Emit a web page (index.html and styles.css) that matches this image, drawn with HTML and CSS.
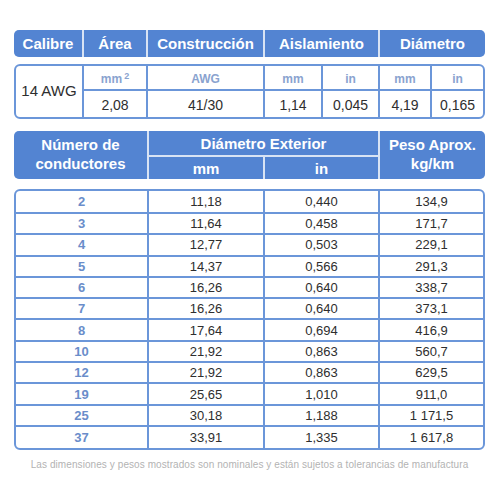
FILE: index.html
```html
<!DOCTYPE html>
<html lang="es">
<head>
<meta charset="UTF-8" />
<meta name="viewport" content="width=device-width, initial-scale=1" />
<title>Cable 14 AWG</title>
<link rel="stylesheet" href="styles.css">
</head>
<body>

<div class="sheet">

  <div class="headBar specHead">
    <div class="hcell">Calibre</div>
    <div class="hcell">Área</div>
    <div class="hcell">Construcción</div>
    <div class="hcell">Aislamiento</div>
    <div class="hcell">Diámetro</div>
  </div>

  <div class="box specBox">
    <div class="cell gauge">14 AWG</div>
    <div class="cell unit">mm<span class="sup">2</span></div>
    <div class="cell unit">AWG</div>
    <div class="cell unit">mm</div>
    <div class="cell unit">in</div>
    <div class="cell unit">mm</div>
    <div class="cell unit">in</div>
    <div class="cell val">2,08</div>
    <div class="cell val">41/30</div>
    <div class="cell val">1,14</div>
    <div class="cell val">0,045</div>
    <div class="cell val">4,19</div>
    <div class="cell val">0,165</div>
  </div>

  <div class="headBar condHead">
    <div class="hcell tall">Número de<br>conductores</div>
    <div class="hcell wide">Diámetro Exterior</div>
    <div class="hcell tall">Peso Aprox.<br>kg/km</div>
    <div class="hcell low">mm</div>
    <div class="hcell low">in</div>
  </div>

  <div class="box condBox" id="condBox"></div>

  <p class="note">Las dimensiones y pesos mostrados son nominales y están sujetos a tolerancias de manufactura</p>
</div>

<script>
  const rows = [
    ['2', '11,18', '0,440', '134,9'],
    ['3', '11,64', '0,458', '171,7'],
    ['4', '12,77', '0,503', '229,1'],
    ['5', '14,37', '0,566', '291,3'],
    ['6', '16,26', '0,640', '338,7'],
    ['7', '16,26', '0,640', '373,1'],
    ['8', '17,64', '0,694', '416,9'],
    ['10', '21,92', '0,863', '560,7'],
    ['12', '21,92', '0,863', '629,5'],
    ['19', '25,65', '1,010', '911,0'],
    ['25', '30,18', '1,188', '1 171,5'],
    ['37', '33,91', '1,335', '1 617,8']
  ];

  const condBox = document.getElementById('condBox');
  rows.forEach(r => {
    r.forEach((v, i) => {
      const c = document.createElement('div');
      c.className = i === 0 ? 'cell num' : 'cell data';
      c.textContent = v;
      condBox.appendChild(c);
    });
  });
</script>

</body>
</html>
```

FILE: styles.css
```css
body {
  margin: 0;
  background: #fff;
  font-family: "Liberation Sans", Arial, sans-serif;
  color: #2e2e2e;
}

.sheet {
  width: 471px;
  padding: 30px 0 0 14px;
}

/* barras azules de encabezado */
.headBar {
  display: grid;
  gap: 2px;
  background: #d8e3f4;
  border-radius: 5px;
  overflow: hidden;
}
.hcell {
  background: #5384d2;
  color: #fff;
  font-weight: bold;
  font-size: 15px;
  display: flex;
  align-items: center;
  justify-content: center;
  text-align: center;
}

.specHead {
  grid-template-columns: 68px 62px 115px 113px 105px;
  height: 27px;
}

.condHead {
  margin-top: 12px;
  grid-template-columns: 133px 114px 113px 105px;
  grid-template-rows: 24px 22px;
  line-height: 19px;
}
.condHead .tall { grid-row: span 2; padding-bottom: 2px; }
.condHead .wide { grid-column: span 2; }
.condHead .tall:nth-child(3) { grid-column: 4; grid-row: 1 / span 2; }
.condHead .low { padding-top: 1px; }

/* cajas con bordes */
.box {
  display: grid;
  gap: 2px;
  background: #6b96d9;
  border: 2px solid #6b96d9;
  border-radius: 6px;
  overflow: hidden;
}
.cell {
  background: #fff;
  display: flex;
  align-items: center;
  justify-content: center;
}

.specBox {
  margin-top: 7px;
  grid-template-columns: 66px 62px 115px 56px 55px 50px 51px;
  grid-template-rows: 23px 26px;
}
.gauge {
  grid-row: span 2;
  font-size: 15px;
  padding-bottom: 2px;
}
.unit {
  font-size: 12px;
  font-weight: bold;
  color: #8aa3cf;
  padding-top: 2px;
}
.sup {
  font-size: 9px;
  margin: 0 0 5px 2px;
}
.val {
  font-size: 14px;
  padding-top: 1px;
}

.condBox {
  margin-top: 10px;
  grid-template-columns: 131px 114px 113px 103px;
  grid-template-rows: 21px repeat(10, 19.3px) 21px;
}
.num {
  font-size: 13px;
  font-weight: bold;
  color: #6a8dca;
}
.data {
  font-size: 13px;
}

.note {
  margin: 9px 0 0;
  text-align: center;
  font-size: 10px;
  letter-spacing: 0.08px;
  color: #b3b3b3;
}
```
